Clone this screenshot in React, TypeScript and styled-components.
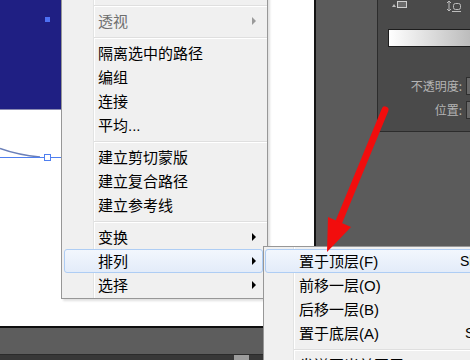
import React from "react";
import styled, { createGlobalStyle } from "styled-components";

const Global = createGlobalStyle`
  html, body { margin: 0; padding: 0; background: #fff; }
  body { font-family: "Liberation Sans", "Noto Sans CJK SC", sans-serif; }
`;

const Screen = styled.div`
  position: relative;
  width: 470px;
  height: 360px;
  overflow: hidden;
  display: flex;
  flex-direction: column;
  background: #383838;
`;

const Workspace = styled.div`
  display: flex;
  height: 326px;
  flex-shrink: 0;
`;

const Artboard = styled.div`
  width: 314px;
  flex-shrink: 0;
  background: #fff;
  border-right: 2px solid #141414;
  display: flex;
  flex-direction: column;
`;

const FilledShape = styled.div`
  position: relative;
  width: 150px;
  height: 109px;
  background: #1f1f83;
  border-bottom: 1px solid #8a8ab2;
`;

const AnchorDot = styled.span`
  position: absolute;
  left: 45px;
  top: 17px;
  width: 5px;
  height: 5px;
  background: #4d70f3;
`;

const PathArt = styled.svg`
  display: block;
`;

const Pasteboard = styled.div`
  flex: 1;
  background: #5b5b5b;
  overflow: hidden;
  display: flex;
  align-items: flex-start;
  padding-left: 61px;
`;

const Panel = styled.div`
  flex-shrink: 0;
  width: 110px;
  height: 131px;
  background: #4a4a4a;
  border-left: 1px solid #2c2c2c;
  border-bottom: 1px solid #2c2c2c;
  display: flex;
  flex-direction: column;
`;

const PanelIcons = styled.div`
  height: 12px;
  display: flex;
  align-items: flex-start;
  padding-left: 13px;
  gap: 39px;
`;

const GradientBar = styled.div`
  margin: 17px 0 0 10px;
  width: 110px;
  height: 18px;
  box-sizing: border-box;
  border: 1px solid #1d1d1d;
  background: linear-gradient(to right, #ffffff, #a6a6a6);
`;

const FieldRow = styled.div<{ $gap: number }>`
  margin-top: ${(p) => p.$gap}px;
  height: 20px;
  display: flex;
  align-items: center;
  justify-content: flex-end;
  gap: 4px;
`;

const FieldLabel = styled.span`
  font-family: "Noto Sans CJK SC", sans-serif;
  font-size: 12px;
  line-height: 1;
  color: #b4b4b4;
`;

const FieldBox = styled.span`
  width: 22px;
  height: 18px;
  box-sizing: border-box;
  background: #686868;
  border: 1px solid #2e2e2e;
`;

const BottomLine = styled.div`
  height: 2px;
  background: #0f0f0f;
  flex-shrink: 0;
`;

const StatusBar = styled.div`
  height: 26px;
  background: #5d5d5d;
  flex-shrink: 0;
`;

const ScrollTrack = styled.div`
  flex: 1;
  background: #383838;
  border-top: 1px solid #2b2b2b;
  padding-left: 234px;
`;

const ScrollThumb = styled.div`
  width: 15px;
  height: 6px;
  background: #9c9c9c;
`;

const ContextMenu = styled.div`
  position: absolute;
  left: 61px;
  top: -24px;
  width: 207px;
  box-sizing: border-box;
  border: 1px solid #979797;
  padding: 24px 0 1px;
  background: linear-gradient(
    to right,
    #f0f0f0 0 31px,
    #e2e3e3 31px 32px,
    #ffffff 32px 33px,
    #f0f0f0 33px
  );
  box-shadow: 2px 2px 2px rgba(0, 0, 0, 0.12);
`;

const SubMenu = styled(ContextMenu)`
  left: 263px;
  top: 246px;
  width: 293px;
  padding: 2px 0 1px;
  background: linear-gradient(
    to right,
    #f0f0f0 0 29px,
    #e2e3e3 29px 30px,
    #ffffff 30px 31px,
    #f0f0f0 31px
  );
`;

const MenuItem = styled.div<{ $active?: boolean; $disabled?: boolean }>`
  height: 24px;
  box-sizing: border-box;
  display: flex;
  align-items: center;
  padding: 0 ${(p) => (p.$active ? 6 : 11)}px 0 ${(p) => (p.$active ? 33 : 36)}px;
  margin: 0 ${(p) => (p.$active ? 4 : 0)}px 0 ${(p) => (p.$active ? 2 : 0)}px;
  border: ${(p) => (p.$active ? "1px solid #aecdf4" : "none")};
  border-radius: 3px;
  background: ${(p) =>
    p.$active ? "linear-gradient(#f2f7fd, #e3ecf9)" : "transparent"};
  font-size: 15px;
  line-height: 1;
  color: ${(p) => (p.$disabled ? "#6e6e6e" : "#000")};
  white-space: nowrap;
`;

const SubMenuItem = styled(MenuItem)`
  padding: 0 20px 0 ${(p) => (p.$active ? 33 : 35)}px;
  margin: 0 ${(p) => (p.$active ? 4 : 0)}px 0 ${(p) => (p.$active ? 1 : 0)}px;
`;

const ItemLabel = styled.span``;

const Shortcut = styled.span`
  margin-left: auto;
  font-family: "Liberation Sans", sans-serif;
  font-size: 14px;
`;

const SubArrow = styled.span<{ $disabled?: boolean }>`
  margin-left: auto;
  width: 0;
  height: 0;
  border-left: 4px solid ${(p) => (p.$disabled ? "#9a9a9a" : "#000")};
  border-top: 4px solid transparent;
  border-bottom: 4px solid transparent;
`;

const Separator = styled.div<{ $indent: number }>`
  margin: 4px 0 2px ${(p) => p.$indent}px;
  border-top: 1px solid #dfdfdf;
  border-bottom: 1px solid #ffffff;
`;

const Callout = styled.svg`
  position: absolute;
  left: 0;
  top: 0;
  pointer-events: none;
`;

type Entry =
  | { sep: true }
  | { label: string; sub?: boolean; active?: boolean; disabled?: boolean };

const mainMenu: Entry[] = [
  { sep: true },
  { label: "透视", sub: true, disabled: true },
  { sep: true },
  { label: "隔离选中的路径" },
  { label: "编组" },
  { label: "连接" },
  { label: "平均..." },
  { sep: true },
  { label: "建立剪切蒙版" },
  { label: "建立复合路径" },
  { label: "建立参考线" },
  { sep: true },
  { label: "变换", sub: true },
  { label: "排列", sub: true, active: true },
  { label: "选择", sub: true },
];

const arrangeMenu: ({ sep: true } | { label: string; key: string; active?: boolean })[] = [
  { label: "置于顶层(F)", key: "Shift+Ctrl+]", active: true },
  { label: "前移一层(O)", key: "" },
  { label: "后移一层(B)", key: "" },
  { label: "置于底层(A)", key: "Shift+Ctrl+[" },
  { sep: true },
  { label: "发送至当前图层(L)", key: "" },
];

export default function App() {
  return (
    <>
      <Global />
      <Screen>
        <Workspace>
          <Artboard>
            <FilledShape>
              <AnchorDot />
            </FilledShape>
            <PathArt width="314" height="60" viewBox="0 0 314 60">
              <path d="M0 38.5 Q 18 45 40 47" fill="none" stroke="#6a7fb8" strokeWidth="1.4" />
              <path d="M0 47.5 H 200" fill="none" stroke="#4f7ff0" strokeWidth="1" />
              <rect x="44.5" y="44.5" width="6" height="6" fill="#fff" stroke="#4f7ff0" strokeWidth="1" />
            </PathArt>
          </Artboard>
          <Pasteboard>
            <Panel>
              <PanelIcons>
                <svg width="16" height="9" viewBox="0 0 16 9">
                  <path d="M1 7 L3 4 L5 7 Z" fill="#bdbdbd" />
                  <rect x="6.5" y="1.5" width="9" height="6" fill="#6c6c6c" stroke="#cfcfcf" />
                </svg>
                <svg width="16" height="13" viewBox="0 0 16 13">
                  <path d="M3 1 V11 M1 3 L3 1 L5 3 M1 9 L3 11 L5 9" fill="none" stroke="#bdbdbd" />
                  <rect x="7.5" y="3.5" width="7" height="6" rx="2" fill="none" stroke="#bdbdbd" />
                  <path d="M6 11.5 H15" stroke="#bdbdbd" />
                </svg>
              </PanelIcons>
              <GradientBar />
              <FieldRow $gap={29}>
                <FieldLabel>不透明度:</FieldLabel>
                <FieldBox />
              </FieldRow>
              <FieldRow $gap={4}>
                <FieldLabel>位置:</FieldLabel>
                <FieldBox />
              </FieldRow>
            </Panel>
          </Pasteboard>
        </Workspace>
        <BottomLine />
        <StatusBar />
        <ScrollTrack>
          <ScrollThumb />
        </ScrollTrack>

        <ContextMenu>
          {mainMenu.map((e, i) =>
            "sep" in e ? (
              <Separator key={i} $indent={32} />
            ) : (
              <MenuItem key={i} $active={e.active} $disabled={e.disabled}>
                <ItemLabel>{e.label}</ItemLabel>
                {e.sub && <SubArrow $disabled={e.disabled} />}
              </MenuItem>
            )
          )}
        </ContextMenu>

        <SubMenu>
          {arrangeMenu.map((e, i) =>
            "sep" in e ? (
              <Separator key={i} $indent={30} />
            ) : (
              <SubMenuItem key={i} $active={e.active}>
                <ItemLabel>{e.label}</ItemLabel>
                {e.key && <Shortcut>{e.key}</Shortcut>}
              </SubMenuItem>
            )
          )}
        </SubMenu>

        <Callout width="470" height="360" viewBox="0 0 470 360">
          <line x1="385" y1="110" x2="338" y2="224" stroke="#f20d0d" strokeWidth="7" strokeLinecap="round" />
          <polygon points="327,252 328,217 351,227" fill="#f20d0d" />
        </Callout>
      </Screen>
    </>
  );
}
